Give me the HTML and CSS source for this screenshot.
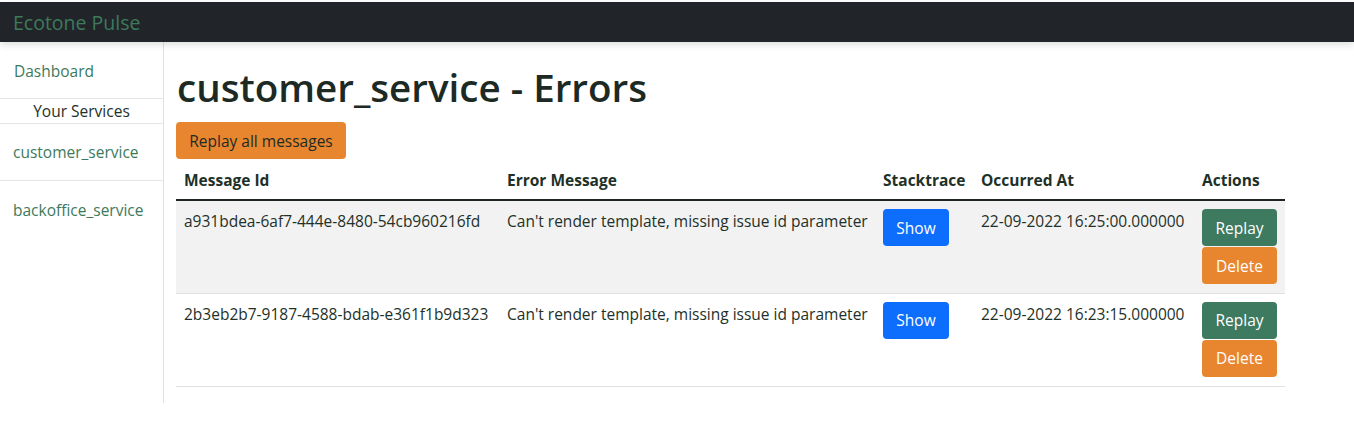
FILE: index.html
```html
<!DOCTYPE html>
<html lang="en">
<head>
<meta charset="utf-8">
<title>Ecotone Pulse</title>
<link rel="stylesheet" href="styles.css">
</head>
<body>
<header class="navbar">
  <span class="brand">Ecotone Pulse</span>
</header>
<div class="layout">
  <nav class="sidebar">
    <a class="side-link dash" href="#">Dashboard</a>
    <div class="side-title">Your Services</div>
    <a class="side-link svc" href="#">customer_service</a>
    <a class="side-link svc" href="#">backoffice_service</a>
  </nav>
  <main class="content">
    <h1 class="title">customer_service - Errors</h1>
    <button class="btn btn-orange btn-dark-text">Replay all messages</button>
    <table class="errors">
      <colgroup>
        <col class="c1"><col class="c2"><col class="c3"><col class="c4"><col class="c5">
      </colgroup>
      <thead>
        <tr>
          <th>Message Id</th>
          <th>Error Message</th>
          <th>Stacktrace</th>
          <th>Occurred At</th>
          <th>Actions</th>
        </tr>
      </thead>
      <tbody>
        <tr class="striped">
          <td>a931bdea-6af7-444e-8480-54cb960216fd</td>
          <td>Can't render template, missing issue id parameter</td>
          <td><button class="btn btn-blue">Show</button></td>
          <td>22-09-2022 16:25:00.000000</td>
          <td class="actions"><button class="btn btn-green">Replay</button><button class="btn btn-orange">Delete</button></td>
        </tr>
        <tr>
          <td>2b3eb2b7-9187-4588-bdab-e361f1b9d323</td>
          <td>Can't render template, missing issue id parameter</td>
          <td><button class="btn btn-blue">Show</button></td>
          <td>22-09-2022 16:23:15.000000</td>
          <td class="actions"><button class="btn btn-green">Replay</button><button class="btn btn-orange">Delete</button></td>
        </tr>
      </tbody>
    </table>
  </main>
</div>
</body>
</html>
```
FILE: styles.css
```css
* { box-sizing: border-box; }
html, body { margin: 0; padding: 0; }
body {
  font-family: "Open Sans", "Noto Sans", sans-serif;
  font-size: 15.5px;
  color: #1e3128;
  background: #fff;
  padding-top: 2px;
}
.navbar {
  height: 40px;
  background: #212529;
  display: flex;
  align-items: center;
  padding-left: 13px;
  position: relative;
  z-index: 2;
  box-shadow: 0 3px 7px rgba(0,0,0,0.13);
}
.brand {
  color: #3d7a5c;
  font-size: 19.5px;
}
.layout {
  display: flex;
  align-items: flex-start;
}
.sidebar {
  width: 164px;
  height: 361px;
  border-right: 1px solid #dee2e6;
  display: flex;
  flex-direction: column;
}
.side-link {
  color: #3d7a5c;
  text-decoration: none;
  display: flex;
  align-items: center;
}
.dash {
  height: 57px;
  padding-left: 14px;
  padding-top: 1px;
  border-bottom: 1px solid #e3e5e7;
}
.side-title {
  height: 25px;
  text-align: center;
  line-height: 24px;
  border-bottom: 1px solid #e3e5e7;
  color: #1e3128;
}
.svc {
  height: 57px;
  padding-left: 13px;
  border-bottom: 1px solid #e3e5e7;
}
.svc:last-child { border-bottom: none; }
.content {
  padding-left: 12px;
  padding-top: 23px;
}
.title {
  margin: 0 0 12px 1px;
  font-size: 38.6px;
  font-weight: 600;
  line-height: 45px;
  color: #1d2a24;
}
.btn {
  font-family: inherit;
  font-size: 15.5px;
  border: none;
  border-radius: 4px;
  height: 37px;
  padding: 0 10px;
  color: #fff;
  cursor: pointer;
  display: block;
}
.btn-orange { background: #e8862f; }
.btn-dark-text { color: #1e2a24; width: 170px; }
.btn-blue { background: #0d6efd; width: 66px; }
.btn-green { background: #3d7a5f; width: 75px; }
.actions .btn-orange { width: 75px; margin-top: 1px; }
.errors {
  width: 1109px;
  table-layout: fixed;
  border-collapse: collapse;
  margin-top: 1px;
}
.c1 { width: 323px; }
.c2 { width: 376px; }
.c3 { width: 98px; }
.c4 { width: 221px; }
.c5 { width: 91px; }
.errors th {
  text-align: left;
  font-weight: 700;
  height: 40px;
  padding: 0 8px;
  border-bottom: 2px solid #1e2421;
  vertical-align: middle;
}
.errors td {
  padding: 8px;
  vertical-align: top;
  border-bottom: 1px solid #dee2e6;
  height: 93px;
  white-space: nowrap;
}
.errors td:not(.actions) { padding-top: 9px; line-height: 22px; }
.errors td:nth-child(3) { padding-top: 8px; }
.striped td { background: #f2f2f2; }
```
